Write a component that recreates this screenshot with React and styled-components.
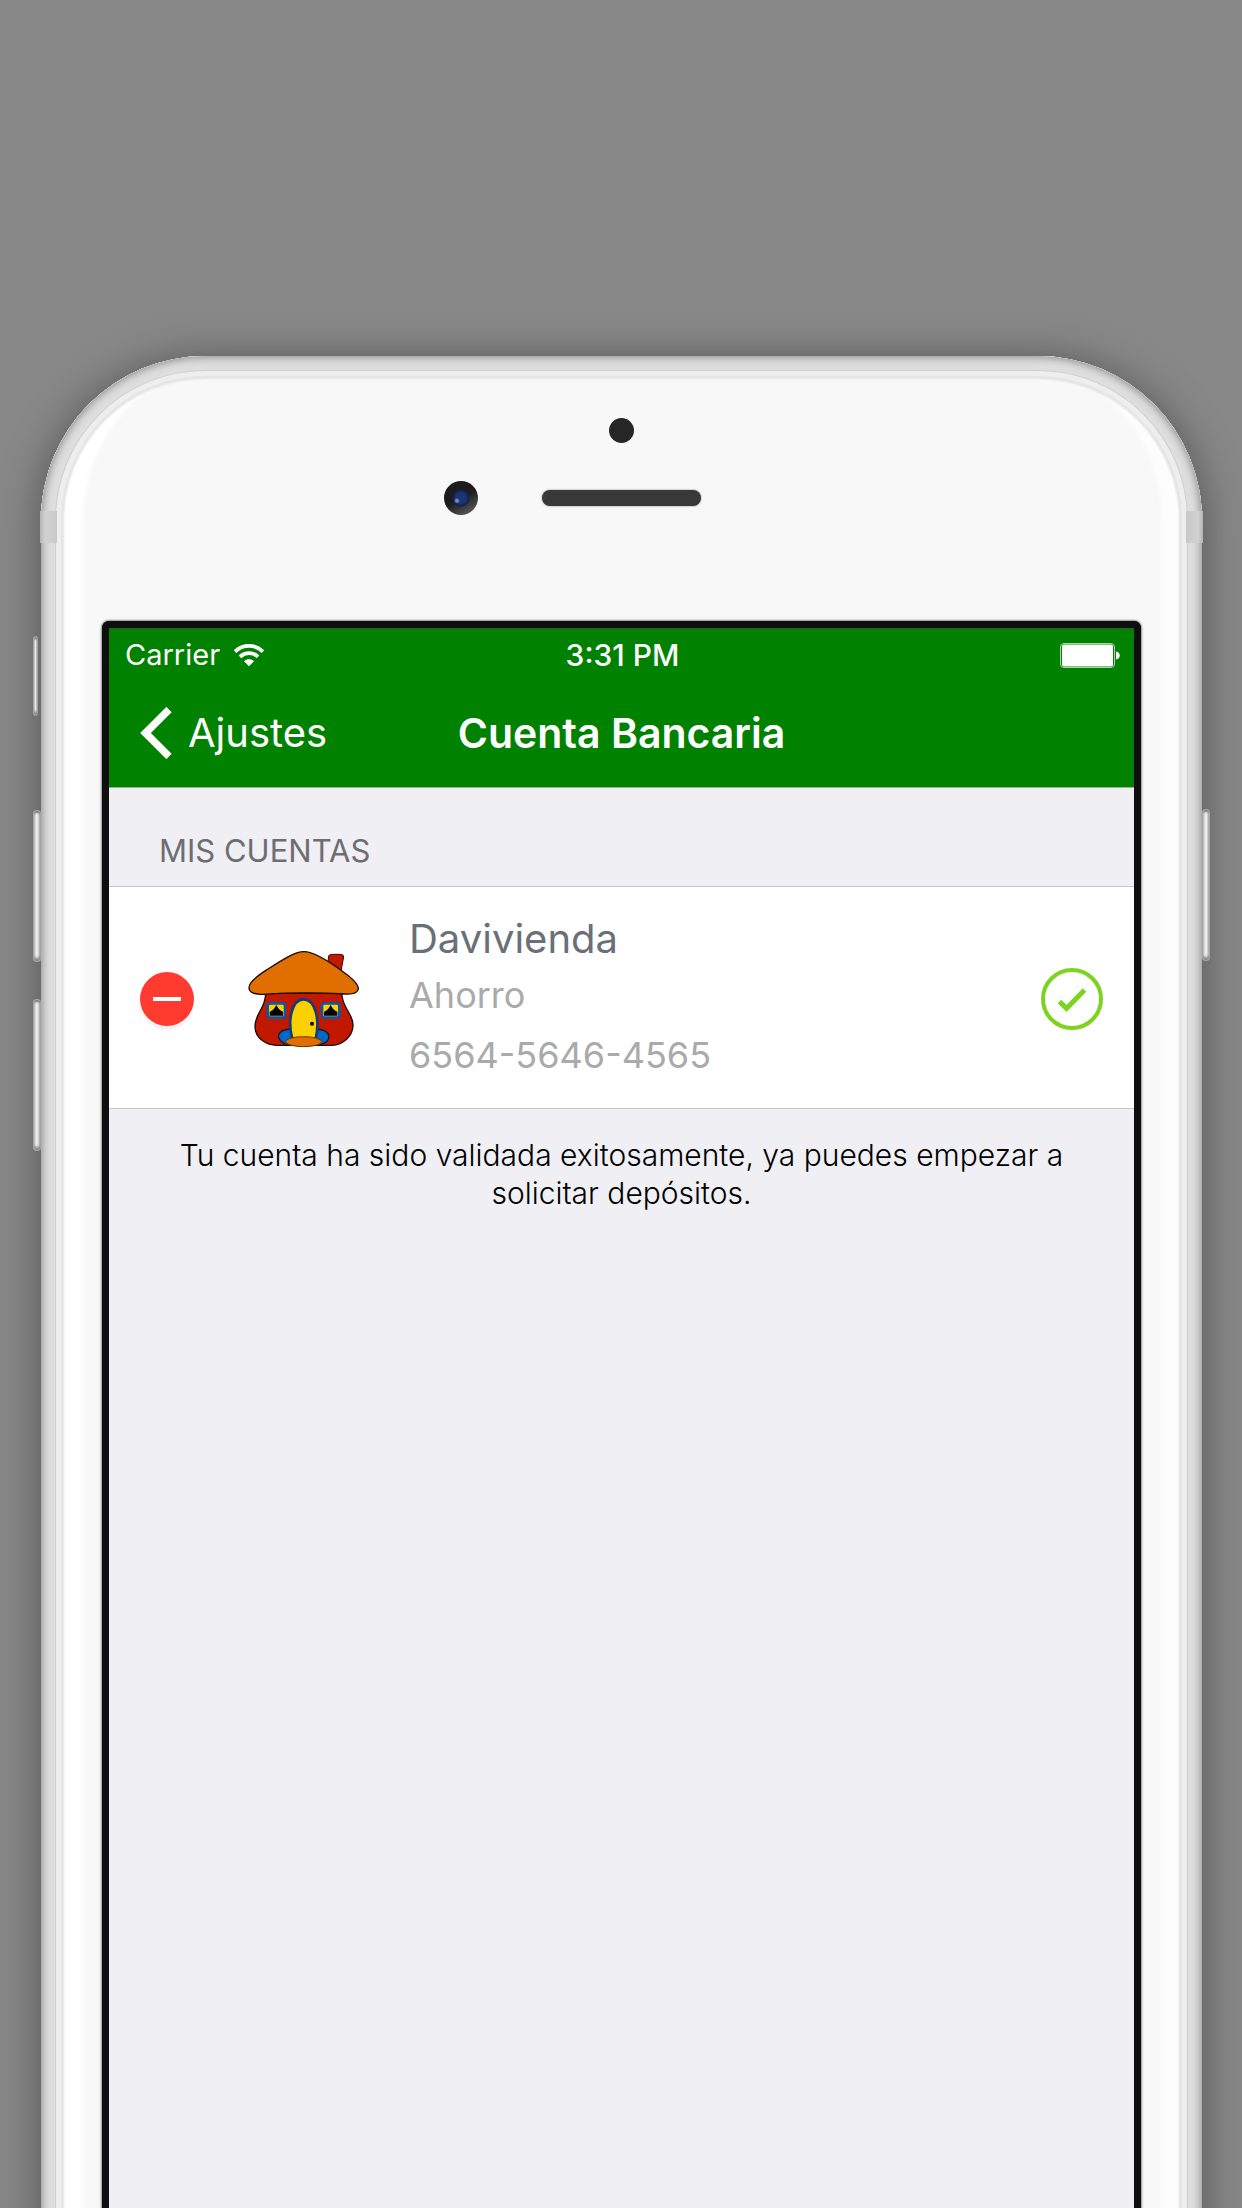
import React from 'react';
import styled, { createGlobalStyle } from 'styled-components';

const GlobalStyle = createGlobalStyle`
  *, *::before, *::after { box-sizing: border-box; }
  html, body { margin: 0; background: #888888; }
  body { font-family: Inter, Roboto, 'Liberation Sans', sans-serif; }
`;

const Stage = styled.main`
  display: flex;
  flex-direction: column;
  min-height: 100vh;
  padding: 356px 40px 0 41px;
  overflow: hidden;
  background: #888888;
`;

const Phone = styled.div`
  position: relative;
  flex: 1;
  display: flex;
  flex-direction: column;
  margin-bottom: -60px;
  padding: 62px 61px 60px;
  border-radius: 164px 164px 0 0;
  background: #f8f8f8;
  box-shadow:
    inset 0 0 8px 1px #868686,
    inset 0 0 4px 12px #dedede,
    inset 0 0 0 14px #dedede,
    inset 0 0 0 15px #cecece,
    inset 0 0 1px 20px #eeeeee,
    inset 0 0 2px 23px #e4e4e4,
    inset 42px 0 4px 0 #ffffff,
    inset -40px 0 4px 0 #fdfdfd,
    0 4px 44px rgba(0, 0, 0, 0.4);
`;

const SideKey = styled.span`
  position: absolute;
  top: ${(p) => p.$top}px;
  ${(p) => p.$side}: -8px;
  width: ${(p) => p.$width || 8}px;
  height: ${(p) => p.$height}px;
  border-radius: 3px;
  border: 1px solid #a4a4a4;
  background: linear-gradient(to right, #c4c4c4, #f4f4f4 50%, #b4b4b4);
  box-shadow: inset 0 3px 2px -1px #7a7a7a, inset 0 -4px 3px -1px #8a8a8a;
`;

const AntennaBand = styled.span`
  position: absolute;
  top: 155px;
  ${(p) => p.$side}: -1px;
  width: 17px;
  height: 32px;
  background: linear-gradient(to ${(p) => p.$side}, #c8c8c8, #d2d2d2 70%, #b4b4b4);
`;

const Hardware = styled.div`
  display: flex;
  flex-direction: column;
  align-items: center;
  gap: 38px;
  padding-bottom: 106px;
`;

const Sensor = styled.span`
  width: 25px;
  height: 25px;
  border-radius: 50%;
  background: #262626;
`;

const SpeakerRow = styled.div`
  display: grid;
  grid-template-columns: 1fr auto 1fr;
  align-items: center;
  gap: 64px;
  width: 100%;
`;

const Camera = styled.span`
  justify-self: end;
  width: 34px;
  height: 34px;
  border-radius: 50%;
  background:
    radial-gradient(circle at 38% 58%, #6f8fd0 0 1px, transparent 3px),
    radial-gradient(circle, #1c3375 0 5px, #14204a 8px, transparent 9px),
    linear-gradient(150deg, #1c1c1c 50%, #6a6a68);
`;

const Speaker = styled.span`
  width: 159px;
  height: 16px;
  border-radius: 8px;
  background: #383838;
  box-shadow: 0 0 2px #777777;
`;

const Screen = styled.section`
  flex: 1;
  display: flex;
  flex-direction: column;
  border: 7px solid #0e0e0e;
  border-bottom: 0;
  border-radius: 7px 7px 0 0;
  background: #efeff4;
  box-shadow: 0 0 2px 1px #8c8f8f;
`;

const TopBar = styled.header`
  padding-bottom: 2px;
  background: #008200;
  color: #ffffff;
  border-top: 1px solid #2f5a30;
  border-bottom: 1px solid #8fb894;
`;

const StatusBar = styled.div`
  display: grid;
  grid-template-columns: 1fr auto 1fr;
  align-items: center;
  height: 52px;
  padding: 0 14px 0 16px;
  font-size: 29px;
  line-height: 36px;
`;

const Carrier = styled.span`
  display: flex;
  align-items: center;
  gap: 14px;
`;

const Clock = styled.time`
  font-size: 30px;
  font-weight: 500;
`;

const BatterySlot = styled.span`
  display: flex;
  justify-content: flex-end;
`;

const NavBar = styled.nav`
  display: grid;
  grid-template-columns: 1fr auto 1fr;
  align-items: center;
  height: 104px;
  padding: 0 31px;
`;

const BackButton = styled.button`
  display: flex;
  align-items: center;
  gap: 16px;
  justify-self: start;
  padding: 0;
  border: 0;
  background: none;
  color: inherit;
  font: inherit;
  font-size: 40px;
  line-height: 52px;
  cursor: pointer;
`;

const Title = styled.h1`
  margin: 0;
  font-size: 41px;
  line-height: 52px;
  font-weight: 600;
`;

const SectionTitle = styled.h2`
  margin: 0;
  padding: 43px 50px 15px;
  font-size: 31px;
  line-height: 40px;
  font-weight: 400;
  color: #6d6d72;
`;

const AccountList = styled.ul`
  margin: 0;
  padding: 0;
  list-style: none;
  background: #ffffff;
  border-top: 1px solid #c8c7cc;
  border-bottom: 1px solid #c8c7cc;
`;

const AccountRow = styled.li`
  display: flex;
  align-items: center;
  height: 221px;
  padding: 3px 31px 0;
`;

const RemoveButton = styled.button`
  display: grid;
  place-items: center;
  width: 54px;
  height: 54px;
  margin-right: 53px;
  padding: 0;
  border: 0;
  border-radius: 50%;
  background: #ff3b30;
  box-shadow: 0 4px 2px rgba(0, 0, 0, 0.06);
  cursor: pointer;
`;

const AccountText = styled.div`
  flex: 1;
  margin-left: 48px;
`;

const BankName = styled.div`
  font-size: 40px;
  line-height: 52px;
  color: #6b6f78;
`;

const AccountDetail = styled.div`
  font-size: 36px;
  line-height: 60px;
  color: #aaaaaa;
`;

const Note = styled.p`
  margin: 0;
  padding: 27px 60px;
  font-size: 30px;
  line-height: 38px;
  font-weight: 300;
  text-align: center;
  color: #000000;
`;

const WifiIcon = () => (
  <svg width="30" height="23" viewBox="0 0 30 23" fill="none" stroke="#fff" aria-hidden="true">
    <path d="M1 7.600C8.800 0 21.200 0 29 7.600" strokeWidth="3.800" />
    <path d="M6 12.800C11 8 19 8 24 12.800" strokeWidth="3.800" />
    <path d="M10 17.200C13 14.600 17 14.600 20 17.200L15 22.200Z" fill="#fff" stroke="none" />
  </svg>
);

const BatteryIcon = () => (
  <svg width="60" height="25" viewBox="0 0 60 25" aria-hidden="true">
    <rect x=".5" y=".5" width="54" height="24" rx="3.500" fill="none" stroke="#a9d6a9" />
    <rect x="2" y="1.500" width="51" height="22" rx="2" fill="#fff" />
    <path d="M56 8.500C61 9 61 16 56 16.500Z" fill="#fff" />
  </svg>
);

const ChevronIcon = () => (
  <svg width="32" height="52" viewBox="0 0 32 52" fill="none" stroke="#fff" strokeWidth="7.500" aria-hidden="true">
    <path d="M29 2.500L5.500 26L29 49.500" />
  </svg>
);

const MinusIcon = () => (
  <svg width="28" height="4" viewBox="0 0 28 4" aria-hidden="true">
    <rect width="28" height="4" fill="#fff" />
  </svg>
);

const HouseLogo = () => (
  <svg width="114" height="98" viewBox="410 423 342 294" role="img" aria-label="Davivienda" strokeLinejoin="round">
    <path d="M653 460L655 440Q658 436 668 436H690Q700 436 700 444L692 486Z" fill="#c21800" stroke="#3a0a00" strokeWidth="3" />
    <path d="M466 552C466 600 434 612 434 652C434 690 470 709 500 709H664C700 708 728 680 728 648C728 612 696 600 694 552Z" fill="#c21800" stroke="#200800" strokeWidth="4" />
    <path d="M581 428C612 428 668 466 698 488C722 505 745 524 744 540C742 554 726 556 706 555Q580 548 456 556C434 557 416 550 416 536C416 520 442 500 470 482C510 456 552 428 581 428Z" fill="#e06f00" stroke="#160a00" strokeWidth="4" />
    <path d="M541 660Q506 662 504 682Q510 702 530 706H632Q656 700 656 680Q650 662 619 660Z" fill="#0068c8" stroke="#10182c" strokeWidth="4" />
    <path d="M546 690C530 630 546 571 580 571C614 571 630 630 616 690Z" fill="#fdd000" stroke="#0c3f78" strokeWidth="8" />
    <circle cx="605" cy="644" r="6" fill="#000" />
    <ellipse cx="580" cy="698" rx="54" ry="15" fill="#e06f00" stroke="#6c3200" strokeWidth="3" />
    {[498, 661].map((x) => (
      <g key={x}>
        <rect x={x - 26} y="583" width="52" height="43" rx="8" fill="#fdd000" stroke="#0c56a8" strokeWidth="8" />
        <path d={`M${x - 20} 620V608Q${x - 7} 604 ${x} 587Q${x + 7} 604 ${x + 20} 608V620Z`} fill="#000" />
      </g>
    ))}
  </svg>
);

const CheckIcon = () => (
  <svg width="62" height="62" viewBox="0 0 62 62" fill="none" stroke="#7ed321" role="img" aria-label="Validada">
    <circle cx="31" cy="31" r="29" strokeWidth="4" />
    <path d="M18.500 33.500L25.500 40.500L43.500 22" strokeWidth="5" />
  </svg>
);

const account = { bank: 'Davivienda', type: 'Ahorro', number: '6564-5646-4565' };

export default function App() {
  return (
    <>
      <GlobalStyle />
      <Stage>
        <Phone>
          <SideKey $side="left" $top={280} $height={80} $width={5} />
          <SideKey $side="left" $top={454} $height={152} />
          <SideKey $side="left" $top={643} $height={152} />
          <SideKey $side="right" $top={453} $height={152} />
          <AntennaBand $side="left" />
          <AntennaBand $side="right" />
          <Hardware>
            <Sensor />
            <SpeakerRow>
              <Camera />
              <Speaker />
            </SpeakerRow>
          </Hardware>
          <Screen>
            <TopBar>
              <StatusBar>
                <Carrier>Carrier <WifiIcon /></Carrier>
                <Clock>3:31 PM</Clock>
                <BatterySlot><BatteryIcon /></BatterySlot>
              </StatusBar>
              <NavBar>
                <BackButton type="button"><ChevronIcon />Ajustes</BackButton>
                <Title>Cuenta Bancaria</Title>
              </NavBar>
            </TopBar>
            <SectionTitle>MIS CUENTAS</SectionTitle>
            <AccountList>
              <AccountRow>
                <RemoveButton type="button" aria-label="Eliminar cuenta"><MinusIcon /></RemoveButton>
                <HouseLogo />
                <AccountText>
                  <BankName>{account.bank}</BankName>
                  <AccountDetail>{account.type}</AccountDetail>
                  <AccountDetail>{account.number}</AccountDetail>
                </AccountText>
                <CheckIcon />
              </AccountRow>
            </AccountList>
            <Note>Tu cuenta ha sido validada exitosamente, ya puedes empezar a solicitar depósitos.</Note>
          </Screen>
        </Phone>
      </Stage>
    </>
  );
}
